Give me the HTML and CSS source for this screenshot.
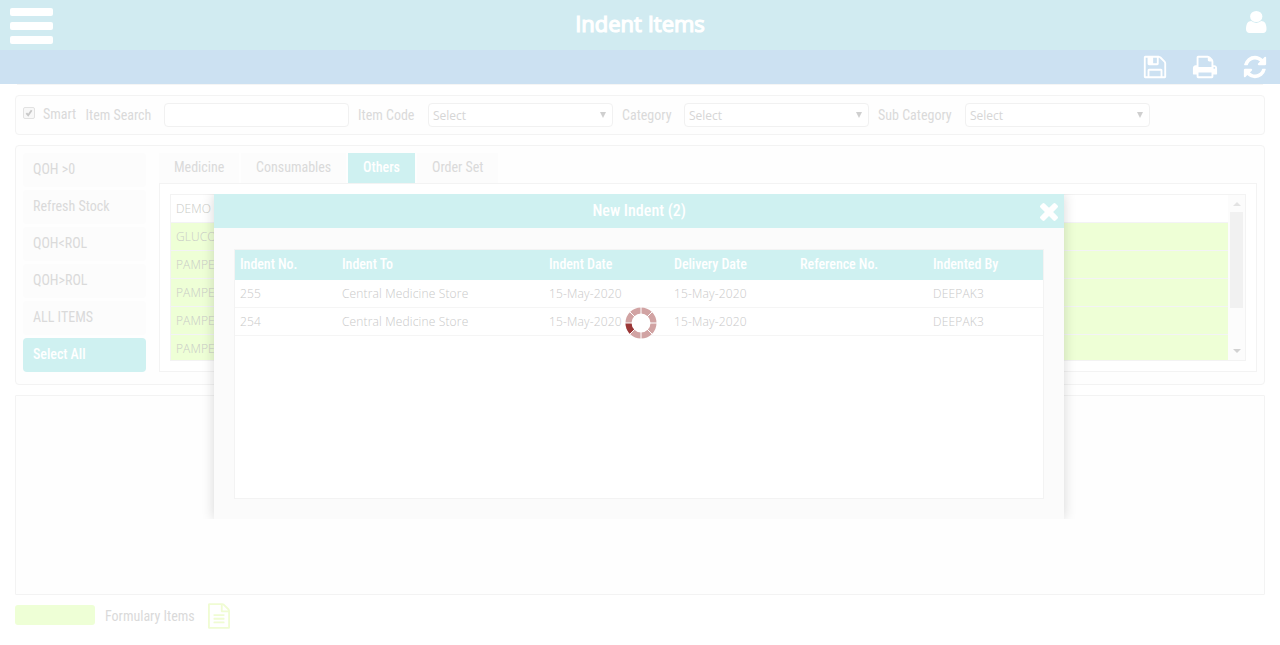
FILE: index.html
```html
<!DOCTYPE html>
<html lang="en">
<head>
<meta charset="utf-8">
<title>Indent Items</title>
<link rel="stylesheet" href="styles.css">
</head>
<body>
<header class="topbar">
  <div class="menu"><i></i><i></i><i></i></div>
  <h1 class="title">Indent Items</h1>
  <svg class="user" viewBox="256 128 1280 1536" preserveAspectRatio="none"><path d="M1536 1399q0 109-62.5 187t-150.5 78h-854q-88 0-150.5-78t-62.5-187q0-85 8.5-160.5t31.5-152 58.5-131 94-89 134.5-34.5q131 128 313 128t313-128q76 0 134.5 34.5t94 89 58.5 131 31.5 152 8.5 160.5zm-256-887q0 159-112.5 271.5t-271.5 112.5-271.5-112.5-112.5-271.5 112.5-271.5 271.5-112.5 271.5 112.5 112.5 271.5z"/></svg>
</header>
<nav class="toolbar">
  <svg viewBox="0 0 1792 1792"><path d="M512 1536h768v-384h-768v384zm896 0h128v-896q0-14-10-38.5t-20-34.5l-281-281q-10-10-34-20t-39-10v416q0 40-28 68t-68 28h-576q-40 0-68-28t-28-68v-416h-128v1280h128v-416q0-40 28-68t68-28h832q40 0 68 28t28 68v416zm-384-928v-320q0-13-9.5-22.5t-22.5-9.5h-192q-13 0-22.5 9.5t-9.5 22.5v320q0 13 9.5 22.5t22.5 9.5h192q13 0 22.5-9.5t9.5-22.5zm640 32v928q0 40-28 68t-68 28h-1344q-40 0-68-28t-28-68v-1344q0-40 28-68t68-28h928q40 0 88 20t76 48l280 280q28 28 48 76t20 88z"/></svg>
  <svg viewBox="0 0 1792 1792"><path d="M448 1536h896v-256h-896v256zm0-640h896v-384h-160q-40 0-68-28t-28-68v-160h-640v640zm1152 64q0-26-19-45t-45-19-45 19-19 45 19 45 45 19 45-19 19-45zm128 0v416q0 13-9.5 22.5t-22.5 9.5h-224v160q0 40-28 68t-68 28h-960q-40 0-68-28t-28-68v-160h-224q-13 0-22.5-9.5t-9.5-22.5v-416q0-79 56.5-135.5t135.5-56.5h64v-544q0-40 28-68t68-28h672q40 0 88 20t76 48l152 152q28 28 48 76t20 88v256h64q79 0 135.5 56.5t56.5 135.5z"/></svg>
  <svg viewBox="0 0 1792 1792"><path d="M1639 1056q0 5-1 7-64 268-268 434.5t-478 166.5q-146 0-282.5-55t-243.5-157l-129 129q-19 19-45 19t-45-19-19-45v-448q0-26 19-45t45-19h448q26 0 45 19t19 45-19 45l-137 137q71 66 161 102t187 36q134 0 250-65t186-179q11-17 53-117 8-23 30-23h192q13 0 22.5 9.5t9.5 22.5zm25-800v448q0 26-19 45t-45 19h-448q-26 0-45-19t-19-45 19-45l138-138q-148-137-349-137-134 0-250 65t-186 179q-11 17-53 117-8 23-30 23h-199q-13 0-22.5-9.5t-9.5-22.5v-7q65-268 270-434.5t480-166.5q146 0 284 55.5t245 156.5l130-129q19-19 45-19t45 19 19 45z"/></svg>
</nav>
<main class="page">
  <div class="edge"></div>
  <section class="filters">
    <span class="check"><svg viewBox="0 0 12 12"><path d="M2.8 6.2l2.2 2.400 4.200-6"/></svg></span>
    <span class="smart">Smart</span>
    <label class="lb-search">Item Search</label><span class="field"></span>
    <label class="lb-code">Item Code</label><span class="field">Select<b></b></span>
    <label class="lb-cat">Category</label><span class="field">Select<b></b></span>
    <label class="lb-sub">Sub Category</label><span class="field">Select<b></b></span>
  </section>
  <section class="stock">
    <div class="side">
      <span>QOH &gt;0</span><span>Refresh Stock</span><span>QOH&lt;ROL</span><span>QOH&gt;ROL</span><span>ALL ITEMS</span><span class="on">Select All</span>
    </div>
    <div class="content">
      <div class="tabs"><span class="t1">Medicine</span><span class="t2">Consumables</span><span class="t3 on">Others</span><span class="t4">Order Set</span></div>
      <div class="pane">
        <div class="list">
          <div class="rows">
            <div class="plain">DEMO</div><div>GLUCOSE</div><div>PAMPERS</div><div>PAMPERS</div><div>PAMPERS</div><div>PAMPERS</div>
          </div>
          <div class="scroll"><i class="up"></i><i class="thumb"></i><i class="down"></i></div>
        </div>
      </div>
    </div>
  </section>
  <section class="empty"></section>
  <footer class="legend">
    <span class="swatch"></span><span class="legend-text">Formulary Items</span>
    <svg viewBox="128 0 1536 1792"><path d="M1596 380q28 28 48 76t20 88v1152q0 40-28 68t-68 28h-1344q-40 0-68-28t-28-68v-1600q0-40 28-68t68-28h896q40 0 88 20t76 48zm-444-244v376h376q-10-29-22-41l-313-313q-12-12-41-22zm384 1528v-1024h-416q-40 0-68-28t-28-68v-416h-768v1536h1280zm-1024-864q0-14 9-23t23-9h704q14 0 23 9t9 23v64q0 14-9 23t-23 9h-704q-14 0-23-9t-9-23v-64zm736 224q14 0 23 9t9 23v64q0 14-9 23t-23 9h-704q-14 0-23-9t-9-23v-64q0-14 9-23t23-9h704zm0 256q14 0 23 9t9 23v64q0 14-9 23t-23 9h-704q-14 0-23-9t-9-23v-64q0-14 9-23t23-9h704z"/></svg>
  </footer>
</main>
<div class="modal-wrap">
  <div class="modal">
    <div class="modal-head"><span>New Indent (2)</span>
      <svg viewBox="302 238 1188 1316"><path d="M1490 1322q0 40-28 68l-136 136q-28 28-68 28t-68-28l-294-294-294 294q-28 28-68 28t-68-28l-136-136q-28-28-28-68t28-68l294-294-294-294q-28-28-28-68t28-68l136-136q28-28 68-28t68 28l294 294 294-294q28-28 68-28t68 28l136 136q28 28 28 68t-28 68l-294 294 294 294q28 28 28 68z"/></svg>
    </div>
    <div class="grid">
      <div class="row head"><span>Indent No.</span><span>Indent To</span><span>Indent Date</span><span>Delivery Date</span><span>Reference No.</span><span>Indented By</span></div>
      <div class="row"><span>255</span><span>Central Medicine Store</span><span>15-May-2020</span><span>15-May-2020</span><span></span><span>DEEPAK3</span></div>
      <div class="row"><span>254</span><span>Central Medicine Store</span><span>15-May-2020</span><span>15-May-2020</span><span></span><span>DEEPAK3</span></div>
    </div>
  </div>
</div>
<svg class="spinner" viewBox="0 0 32 32">
  <circle cx="16" cy="16" r="15.5" fill="#fff"/>
  <circle cx="16" cy="16" r="12.5" fill="none" stroke="#d1a3a3" stroke-width="6"/>
  <path d="M3.500 16A12.500 12.500 0 0 0 7.160 24.840" fill="none" stroke="#9b3737" stroke-width="6"/>
  <path d="M16 0v32M0 16h32M4.700 4.700l22.600 22.600M27.300 4.700L4.700 27.300" stroke="#fff" stroke-width="1"/>
</svg>
</body>
</html>
```
FILE: styles.css
```css
* { box-sizing: border-box; }
body { margin: 0; height: 645px; overflow: hidden; position: relative; background: #fff; color: #dadada; font: 400 14px/20px "Roboto Condensed", Roboto, sans-serif; font-stretch: condensed; white-space: nowrap; }
svg { display: block; fill: #fff; }
.topbar { height: 50px; background: #d1ebf1; display: grid; grid-template-columns: 43px 1fr 21px; align-items: start; padding: 8px 13px 0 10px; }
.menu { display: flex; flex-direction: column; gap: 6.500px; width: 43px; }
.menu i { height: 7.600px; border-radius: 2px; background: #fff; }
.title { margin: 0; padding-right: 19px; text-align: center; font: 400 22px/30px "Open Sans", sans-serif; letter-spacing: 0; -webkit-text-stroke: 1.200px #fff; color: #fff; }
.user { width: 20.500px; height: 22px; margin-top: 3px; }
.toolbar { height: 34px; background: #cce1f2; display: flex; justify-content: flex-end; gap: 24px; padding: 4px 12px 0; }
.toolbar svg { width: 26px; height: 26px; }
.page { padding: 0 15px; }
.edge { height: 1px; margin: 0 2px 10px; background: #f5f5f5; }
.filters, .stock { border: 1px solid #f3f3f3; border-radius: 4px; background: #fefefe; }
.filters { height: 40px; display: flex; align-items: flex-start; padding: 7px 0 0 7px; }
.check { width: 12px; height: 12px; margin-top: 4px; border: 1px solid #e2e2e2; border-radius: 2px; background: #f8f8f8; }
.check svg { width: 10px; height: 10px; fill: none; stroke: #c8c8c8; stroke-width: 2.200; }
.smart { width: 42.500px; margin: 1px 0 0 8px; }
.filters label { margin-top: 2px; }
.lb-search { width: 78.500px; }
.lb-code { width: 70px; margin-left: 9px; }
.lb-cat { width: 62px; margin-left: 9px; }
.lb-sub { width: 87px; margin-left: 9px; }
.field { width: 185px; height: 24px; border: 1px solid #f1f1f1; border-radius: 4px; background: #fff; display: flex; justify-content: space-between; padding: 0 6px 0 4px; font: 12px/24px "Open Sans", sans-serif; color: #d6d6d6; }
.field b { margin-top: 8px; height: 0; border: 3.500px solid transparent; border-top: 6px solid #cfcfcf; border-bottom: 0; }
.stock { margin-top: 10px; height: 240px; display: flex; gap: 13px; padding: 7px 7px 0; }
.side { width: 123px; display: flex; flex-direction: column; gap: 3px; }
.side span { height: 34px; line-height: 33px; padding-left: 10px; border-radius: 4px; background: #fcfcfc; }
.side .on, .tabs .on { background: #cff1f1; color: #fff; }
.side .on { font-weight: 500; letter-spacing: -0.050px; }
.content { flex: 1; }
.tabs { display: flex; gap: 2px; }
.tabs span { height: 30px; line-height: 29px; padding-left: 15px; background: #fcfcfc; }
.t1 { width: 80px; } .t2 { width: 105px; } .t3 { width: 67px; font-weight: 500; } .t4 { width: 81px; }
.pane { height: 189px; border: 1px solid #f3f3f3; padding: 10px; background: #fff; }
.list { height: 167px; border: 1px solid #f3f3f3; display: flex; overflow: hidden; }
.rows { flex: 1; font: 300 12px/27px "Open Sans", sans-serif; letter-spacing: 0.100px; }
.rows div { height: 28px; padding-left: 5px; border-bottom: 1px solid #f3f3f6; background: #eeffd6; color: #c9cbc6; }
.rows .plain { background: #fff; }
.scroll { width: 17px; background: #fcfcfc; display: flex; flex-direction: column; align-items: center; }
.scroll .up { margin-top: 7px; border: 4px solid transparent; border-bottom: 4px solid #e3e3e3; border-top: 0; }
.thumb { width: 13px; height: 96px; margin-top: 6px; background: #f1f1f1; }
.down { margin-top: 41px; border: 4px solid transparent; border-top: 4px solid #d2d2d2; border-bottom: 0; }
.empty { margin-top: 10px; height: 200px; border: 1px solid #f3f3f3; background: #fefefe; border-radius: 1px; }
.legend { display: flex; align-items: flex-start; padding-top: 8px; }
.swatch { width: 80px; height: 20px; margin: 2px 10px 0 0; border-radius: 3px; background: #eeffd6; }
.legend-text { width: 103px; margin-top: 3px; }
.legend svg { width: 22px; height: 26px; fill: #f0fcd3; }
.modal-wrap { position: absolute; left: 194px; top: 194px; width: 890px; height: 325px; padding: 0 20px; overflow: hidden; }
.modal { height: 325px; background: #fbfbfb; box-shadow: 0 0 12px rgba(0, 0, 0, 0.160); }
.modal-head { height: 34px; background: #cff1f1; display: flex; justify-content: space-between; align-items: flex-start; padding: 7px 6px 0 378.500px; font-size: 16px; font-weight: 500; color: #fff; }
.modal-head svg { width: 18px; height: 20px; }
.grid { margin: 21px 20px 0; height: 250px; border: 1px solid #f3f3f3; background: #fff; }
.row { display: grid; grid-template-columns: 102px 207px 125px 126px 133px 1fr; height: 28px; padding-left: 5px; border-bottom: 1px solid #f5f5f5; font: 300 12px/27px "Open Sans", sans-serif; letter-spacing: 0.160px; color: #c9c9c9; }
.row.head { height: 30px; background: #cff1f1; border: 0; font: 500 14px/29px "Roboto Condensed", Roboto, sans-serif; font-stretch: condensed; letter-spacing: -0.050px; color: #fff; }
.spinner { position: absolute; left: 624.500px; top: 306.500px; width: 32px; height: 32px; }
```
